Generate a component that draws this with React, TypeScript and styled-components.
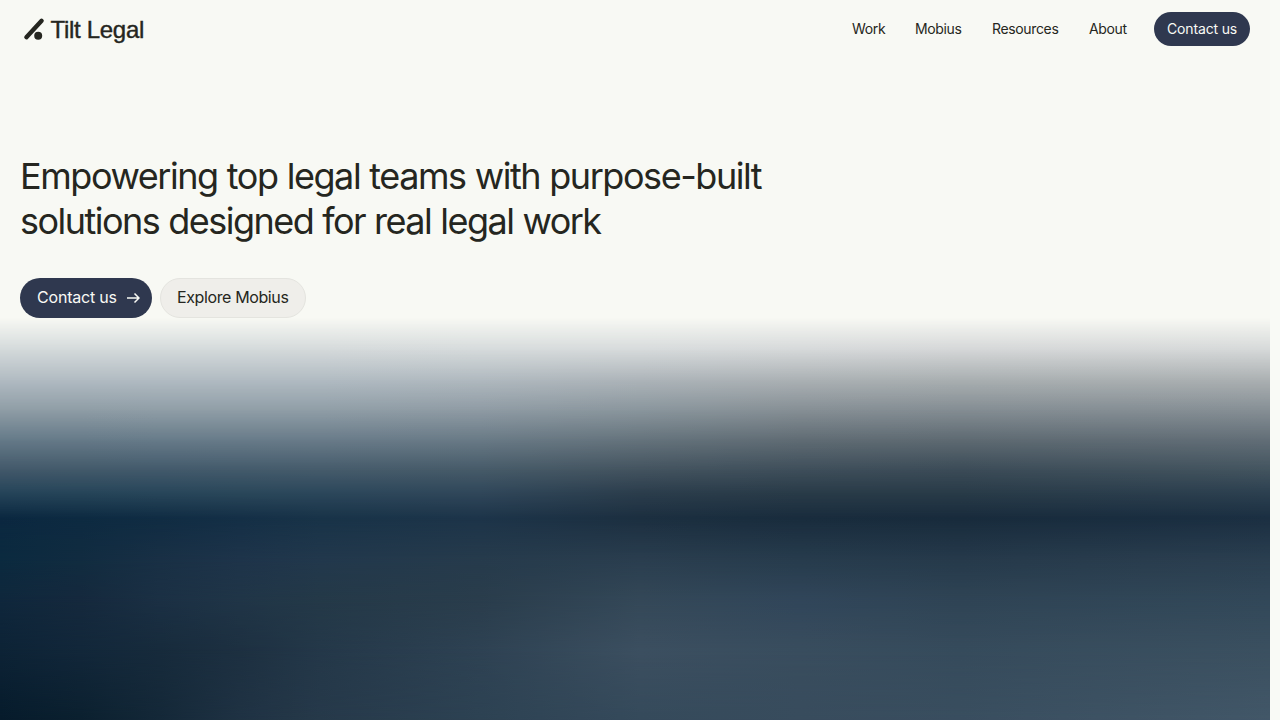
import React from "react";
import styled, { createGlobalStyle } from "styled-components";

const GlobalStyle = createGlobalStyle`
  *, *::before, *::after { box-sizing: border-box; }
  html, body { margin: 0; padding: 0; }
  body {
    height: 720px;
    overflow: hidden;
    background: #f9faf6;
    color: #252620;
    font-family: Inter, "Liberation Sans", sans-serif;
  }
  a { color: inherit; text-decoration: none; }
`;

const Page = styled.div`
  display: flex;
  flex-direction: column;
  width: 1270px;
  height: 720px;
  background: #f8f9f4;
`;

const Header = styled.header`
  display: flex;
  align-items: center;
  justify-content: space-between;
  height: 58px;
  padding: 0 20px 0 20px;
`;

const Logo = styled.a`
  display: flex;
  width: 130px;
  height: 58px;
`;

const LogoText = styled.text`
  font-family: "Liberation Sans", Arial, sans-serif;
  font-size: 24px;
  fill: #252620;
  stroke: #252620;
  stroke-width: 0.4px;
`;

const Nav = styled.nav`
  display: flex;
  align-items: center;
`;

const NavLink = styled.a<{ $width: number; $gap: number }>`
  width: ${(p) => p.$width}px;
  margin-right: ${(p) => p.$gap}px;
  font-size: 14px;
  line-height: 20px;
  letter-spacing: -0.35px;
  white-space: nowrap;
`;

const Pill = styled.a<{ $tone: "dark" | "light"; $size: "small" | "large"; $width: number; $tracking: number }>`
  display: flex;
  align-items: center;
  justify-content: space-between;
  width: ${(p) => p.$width}px;
  height: ${(p) => (p.$size === "small" ? 34 : 40)}px;
  padding: ${(p) => (p.$size === "small" ? "0 12px 0 13px" : p.$tone === "dark" ? "0 12px 2px 17px" : "0 16px 2px 16px")};
  border-radius: 20px;
  border: ${(p) => (p.$tone === "light" ? "1px solid #e4e4df" : "0")};
  background: ${(p) => (p.$tone === "dark" ? "#2f384f" : "#efeeea")};
  color: ${(p) => (p.$tone === "dark" ? "#f9faf5" : "#252620")};
  font-size: ${(p) => (p.$size === "small" ? 14 : 16)}px;
  letter-spacing: ${(p) => p.$tracking}px;
  line-height: 20px;
  white-space: nowrap;
`;

const Hero = styled.section`
  height: 260px;
  padding: 96px 20px 0;
`;

const Title = styled.h1`
  margin: 0;
  font-size: 36px;
  line-height: 45px;
  font-weight: 400;
  white-space: nowrap;
`;

const TitleLine = styled.span<{ $tracking: number }>`
  display: block;
  letter-spacing: ${(p) => p.$tracking}px;
  word-spacing: 0.4px;
`;

const Actions = styled.div`
  display: flex;
  gap: 8px;
  margin-top: 34px;
`;

const Aurora = styled.div`
  display: grid;
  height: 402px;
  background: #f8f9f4;
`;

const Band = styled.div<{ $from: number; $to: number; $colors: string }>`
  grid-area: 1 / 1;
  background: linear-gradient(to right, ${(p) => p.$colors});
  mask-image: linear-gradient(to bottom, transparent ${(p) => p.$from}px, #000 ${(p) => p.$to}px);
`;

/* Colour stops across the backdrop at each height; each band fades in over the previous one. */
const stops = [0, 80, 160, 240, 320, 480, 640, 800, 960, 1270];
const bands: [number, string][] = [
  [32, "d3d9da d3d9da d3d9da d3d9da d4d9da d5dadb d6dadb d5d8d9 d4d6d7 d5d8d8"],
  [62, "b1bbc2 b1bbc2 b1bbc2 b1bbc2 b1bbc2 b0b9bf adb4b9 abb1b4 a9afb1 abb0b2"],
  [92, "8f9da6 8f9da6 909ea7 909ea7 909ea7 8f9ba4 8a969d 868f95 848d93 868f95"],
  [122, "657a88 667a88 677b89 687b89 697b89 697a86 65737c 606c74 5e6a72 626e77"],
  [152, "42586a 42596a 42596b 435a6b 455b6b 465a68 43535f 3e4e5a 3b4b57 43545f"],
  [175, "254459 264559 28465a 2a475a 2c475b 30475a 2b3d4c 293b48 293b48 2c4050"],
  [200, "0b2840 0d2a41 102c43 142f46 183348 1d3449 1c2f40 192c3d 182b3c 1b2f42"],
  [242, "0b2a3f 112c40 193045 1e344a 22384c 263b4c 2a3e4f 273c4d 263a4b 2b3f50"],
  [282, "0f273c 15293d 1b3044 203547 243948 2a3d4c 344858 31465a 2f4455 324859"],
  [332, "0d2336 12273a 172b3c 1d3041 243849 2e4253 3c4f60 394d5e 364b5c 3b5060"],
  [402, "061b2b 0b202f 142838 1f3243 26394a 2d4253 354a5b 384c5d 394e5f 425768"],
];

const links = [
  { label: "Work", width: 33, gap: 30 },
  { label: "Mobius", width: 47, gap: 30 },
  { label: "Resources", width: 67, gap: 30 },
  { label: "About", width: 39, gap: 26 },
];

function gradient(colors: string) {
  return colors
    .split(" ")
    .map((c, i) => `#${c} ${stops[i]}px`)
    .join(", ");
}

export default function App() {
  return (
    <>
      <GlobalStyle />
      <Page>
        <Header>
          <Logo href="#">
            <svg width="130" height="58" viewBox="20 0 130 58">
              <path d="M26.4 37.2 41.6 20.8" stroke="#252620" strokeWidth="4.4" strokeLinecap="round" />
              <circle cx="38.2" cy="35.7" r="4" fill="#252620" />
              <LogoText x="50.5" y="38" textLength="93.8">
                Tilt Legal
              </LogoText>
            </svg>
          </Logo>
          <Nav>
            {links.map((l) => (
              <NavLink key={l.label} href="#" $width={l.width} $gap={l.gap}>
                {l.label}
              </NavLink>
            ))}
            <Pill href="#" $tone="dark" $size="small" $width={96} $tracking={-0.15}>
              Contact us
            </Pill>
          </Nav>
        </Header>
        <Hero>
          <Title>
            <TitleLine $tracking={-1.44}>Empowering top legal teams with purpose-built</TitleLine>
            <TitleLine $tracking={-1.52}>solutions designed for real legal work</TitleLine>
          </Title>
          <Actions>
            <Pill href="#" $tone="dark" $size="large" $width={132} $tracking={-0.2}>
              Contact us
              <svg width="20" height="20" viewBox="0 0 20 20" fill="none" stroke="currentColor" strokeWidth="1.5">
                <path d="M7 11h12M14.5 6.5 19 11l-4.5 4.5" />
              </svg>
            </Pill>
            <Pill href="#" $tone="light" $size="large" $width={146} $tracking={-0.38}>
              Explore Mobius
            </Pill>
          </Actions>
        </Hero>
        <Aurora>
          {bands.map(([y, colors], i) => (
            <Band key={y} $from={i ? bands[i - 1][0] : 0} $to={y} $colors={gradient(colors)} />
          ))}
        </Aurora>
      </Page>
    </>
  );
}
